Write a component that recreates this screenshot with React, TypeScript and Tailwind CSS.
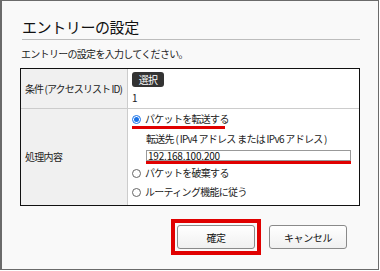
import React from "react";

const font = { fontFamily: '"Noto Sans CJK JP", "Noto Sans", sans-serif' };

const Radio = ({ checked, label }: { checked?: boolean; label: string }) => (
  <label className="flex h-[12px] items-center gap-[4px] whitespace-nowrap text-[10px] leading-[12px] tracking-[-0.7px] text-[#222]">
    <span
      className={`flex h-[9px] w-[9px] shrink-0 items-center justify-center rounded-full border ${
        checked ? "border-[#1a73e8]" : "border-[#666]"
      } bg-white`}
    >
      {checked && <span className="h-[5px] w-[5px] rounded-full bg-[#1a73e8]" />}
    </span>
    {label}
  </label>
);

const btn =
  "h-[24px] w-[78px] rounded-[3px] border border-[#8a8a8a] bg-gradient-to-b from-white to-[#f0f0f0] text-[10px] tracking-[-0.4px] text-[#111]";

export default function App() {
  return (
    <div style={font} className="h-[271px] w-[380px] bg-white">
      <div className="flex h-[270px] w-[379px] flex-col border border-l-2 border-[#6b6b6b] bg-[#f9f9f9] pl-[18px] pr-[18px]">
        <h1 className="mt-[17px] ml-[2px] border-b border-[#bdbdbd] pb-[3px] text-[15px] leading-[18px] font-normal tracking-[-0.4px] text-[#111]">
          エントリーの設定
        </h1>
        <p className="mt-[8px] ml-[1px] text-[10px] leading-[12px] tracking-[-0.7px] text-[#222]">
          エントリーの設定を入力してください。
        </p>

        <div className="mt-[8px] grid w-[340px] grid-cols-[107px_1fr] border-[1.5px] border-[#111] text-[10px] leading-[12px] tracking-[-0.7px] text-[#222]">
          <div className="flex h-[40px] items-center border-r border-b border-[#ccc] bg-[#f0f0f0] pl-[4px] whitespace-nowrap tracking-[-0.9px]">
            条件 (アクセスリスト ID)
          </div>
          <div className="h-[40px] border-b border-[#ccc] bg-white pl-[4px]">
            <div className="mt-[3px] flex h-[15px] w-[32px] items-center justify-center rounded-[3px] bg-[#333] text-[10px] text-white">
              選択
            </div>
            <div className="mt-[5px]">1</div>
          </div>

          <div className="flex h-[96px] items-center border-r border-[#ccc] bg-[#f0f0f0] pl-[4px]">
            処理内容
          </div>
          <div className="h-[96px] bg-white pl-[4px]">
            <div className="mt-[4px] w-[93px] border-b-[3px] border-[#e00000] pb-[1px]">
              <Radio checked label="パケットを転送する" />
            </div>
            <div className="mt-[4px] pl-[14px] whitespace-nowrap">
              転送先 ( IPv4 アドレス または IPv6 アドレス )
            </div>
            <div className="ml-[14px] mt-[5px] w-[205px] border-b-[3px] border-[#e00000]">
              <div className="h-[11px] border border-[#999] bg-white px-[1px] text-[10px] leading-[9px] tracking-[-0.2px] text-[#111]">
                192.168.100.200
              </div>
            </div>
            <div className="mt-[3px]">
              <Radio label="パケットを破棄する" />
            </div>
            <div className="mt-[7px]">
              <Radio label="ルーティング機能に従う" />
            </div>
          </div>
        </div>

        <div className="mt-[13px] flex items-center justify-end gap-[8px] pr-[13px]">
          <div className="border-[4px] border-[#e00000] p-[2px]">
            <div className={`${btn} flex items-center justify-center`}>確定</div>
          </div>
          <div className={`${btn} flex items-center justify-center`}>キャンセル</div>
        </div>
      </div>
    </div>
  );
}
